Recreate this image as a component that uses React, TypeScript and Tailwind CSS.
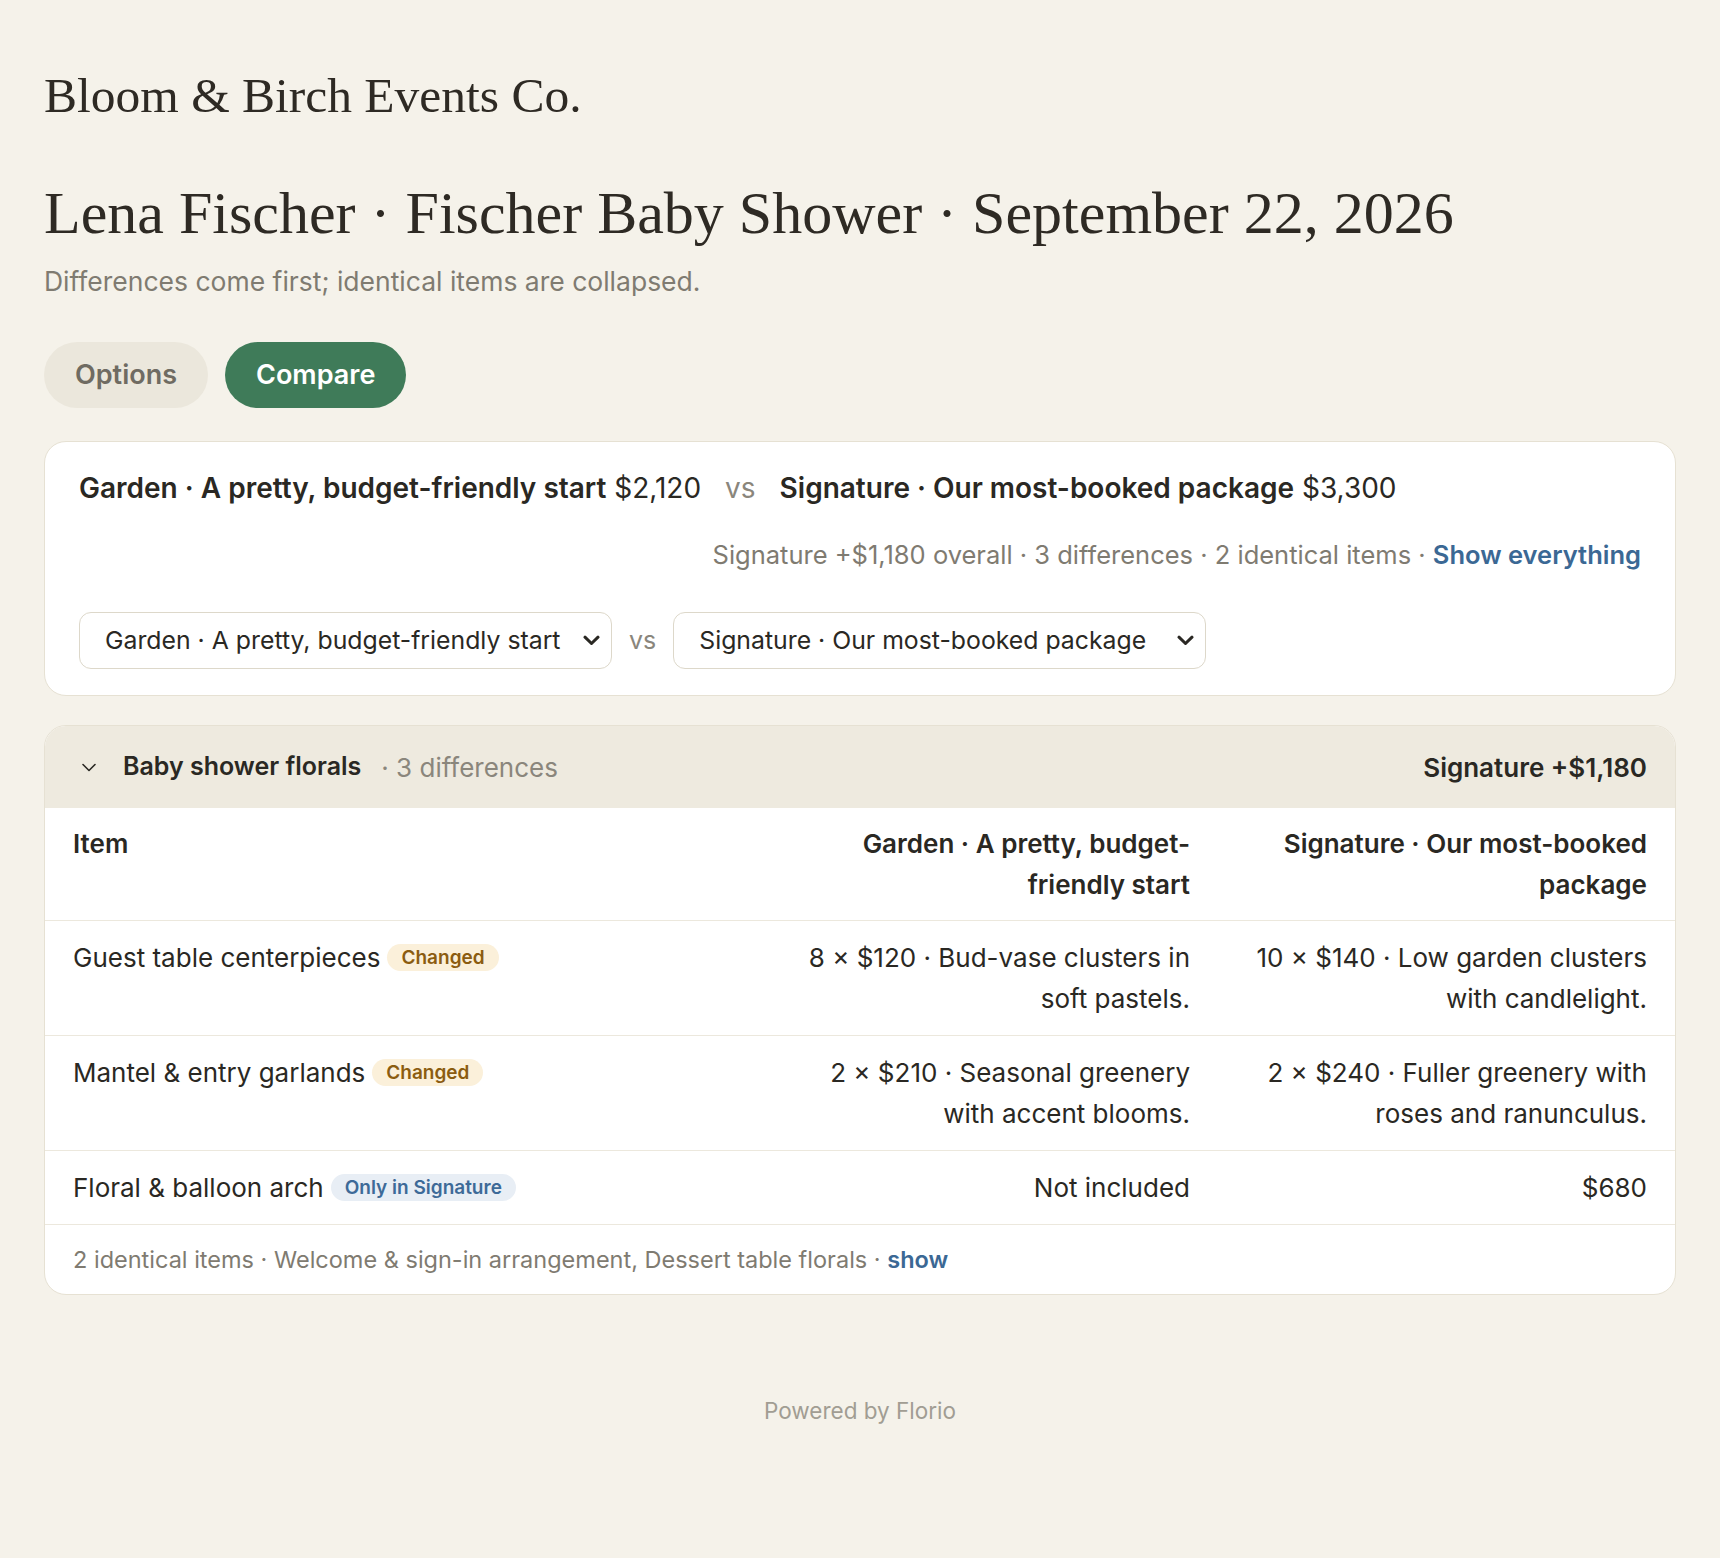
import React from "react";

const serif = "font-['Liberation_Serif','Times_New_Roman',serif]";

type Row = {
  name: string;
  badge: { label: string; tone: "changed" | "only" };
  a: string;
  b: string;
};

const rows: Row[] = [
  {
    name: "Guest table centerpieces",
    badge: { label: "Changed", tone: "changed" },
    a: "8 × $120 · Bud-vase clusters in soft pastels.",
    b: "10 × $140 · Low garden clusters with candlelight.",
  },
  {
    name: "Mantel & entry garlands",
    badge: { label: "Changed", tone: "changed" },
    a: "2 × $210 · Seasonal greenery with accent blooms.",
    b: "2 × $240 · Fuller greenery with roses and ranunculus.",
  },
  {
    name: "Floral & balloon arch",
    badge: { label: "Only in Signature", tone: "only" },
    a: "Not included",
    b: "$680",
  },
];

function Badge({ label, tone }: { label: string; tone: "changed" | "only" }) {
  const cls =
    tone === "changed"
      ? "bg-[#fbf0da] text-[#8b5c10]"
      : "bg-[#e8eef5] text-[#3d6a98]";
  return (
    <span
      className={`ml-[7px] inline-flex h-[27px] items-center rounded-full px-[14px] text-[19px] font-semibold leading-none ${cls}`}
    >
      {label}
    </span>
  );
}

function Chevron({ className = "" }: { className?: string }) {
  return (
    <svg width="17" height="11" viewBox="0 0 17 11" className={className} fill="none">
      <path d="M2 2.2 8.5 8.5 15 2.2" stroke="#2a2823" strokeWidth="3" strokeLinecap="round" strokeLinejoin="round" />
    </svg>
  );
}

function SelectBox({ label }: { label: string }) {
  return (
    <div className="flex h-[57px] w-[533px] items-center justify-between rounded-[12px] border-[1.5px] border-[#ddd8ca] bg-white pl-[25px] pr-[11px] text-[24.8px] text-[#2a2823]">
      <span>{label}</span>
      <Chevron />
    </div>
  );
}

export default function App() {
  return (
    <div className="min-h-[1558px] bg-[#f5f2ea] font-['Inter','Liberation_Sans',sans-serif] text-[#2a2823]">
      <div className="px-[44px] pt-[66px]">
        <div className={`${serif} text-[49.5px] leading-[59px] text-[#2e2a24]`}>
          Bloom &amp; Birch Events Co.
        </div>
        <h1 className={`${serif} mt-[52px] text-[60px] leading-[72px] text-[#2e2a24]`}>
          Lena Fischer · Fischer Baby Shower · September 22, 2026
        </h1>
        <p className="mt-[16px] text-[26.5px] leading-[32px] text-[#7f7b71]">
          Differences come first; identical items are collapsed.
        </p>

        <div className="mt-[45px] flex gap-[17px]">
          <button className="h-[66px] rounded-full bg-[#ebe7dc] px-[31px] text-[27px] font-semibold text-[#6f6b62]">
            Options
          </button>
          <button className="h-[66px] rounded-full bg-[#3f7b59] px-[31px] text-[27px] font-semibold text-white">
            Compare
          </button>
        </div>

        {/* picker card */}
        <section className="mt-[33px] rounded-[22px] border-[1.5px] border-[#e6e1d3] bg-white px-[34px] pb-[26px] pt-[28px]">
          <div className="flex items-center gap-[24px] text-[28px] leading-[36px]">
            <span>
              <span className="font-semibold">Garden · A pretty, budget-friendly start</span> $2,120
            </span>
            <span className="text-[#8a867c]">vs</span>
            <span>
              <span className="font-semibold">Signature · Our most-booked package</span> $3,300
            </span>
          </div>
          <div className="mt-[31px] text-right text-[25.5px] leading-[36px] text-[#7f7b71]">
            Signature +$1,180 overall · 3 differences · 2 identical items ·{" "}
            <span className="font-semibold text-[#3b6894]">Show everything</span>
          </div>
          <div className="mt-[39px] flex items-center gap-[17px]">
            <SelectBox label="Garden · A pretty, budget-friendly start" />
            <span className="text-[25px] text-[#8a867c]">vs</span>
            <SelectBox label="Signature · Our most-booked package" />
          </div>
        </section>

        {/* comparison table */}
        <section className="mt-[29px] overflow-hidden rounded-[22px] border-[1.5px] border-[#e6e1d3] bg-white">
          <div className="flex h-[82px] items-center justify-between bg-[#eeeadf] pl-[37px] pr-[28px] text-[26px]">
            <div className="flex items-center">
              <svg width="14" height="9" viewBox="0 0 14 9" fill="none" className="mr-[27px]">
                <path d="M1 1.5 7 7.5l6-6" stroke="#2a2823" strokeWidth="1.6" strokeLinecap="round" strokeLinejoin="round" />
              </svg>
              <span className="text-[25px] font-semibold">Baby shower florals</span>
              <span className="ml-[20px] text-[#8a867c]">· 3 differences</span>
            </div>
            <span className="font-semibold">Signature +$1,180</span>
          </div>

          <div className="grid grid-cols-[1fr_457px_457px] text-[26px] leading-[41px]">
            <div className="px-[28px] py-[15px] font-semibold">Item</div>
            <div className="px-[28px] py-[15px] text-right font-semibold">
              Garden · A pretty, budget-friendly start
            </div>
            <div className="px-[28px] py-[15px] text-right font-semibold">
              Signature · Our most-booked package
            </div>

            {rows.map((r) => (
              <React.Fragment key={r.name}>
                <div className="flex items-start border-t-[1.5px] border-[#ece8dd] px-[28px] py-[16px]">
                  <span>{r.name}</span>
                  <span className="flex h-[41px] items-center">
                    <Badge label={r.badge.label} tone={r.badge.tone} />
                  </span>
                </div>
                <div className="border-t-[1.5px] border-[#ece8dd] px-[28px] py-[16px] text-right">{r.a}</div>
                <div className="border-t-[1.5px] border-[#ece8dd] px-[28px] py-[16px] text-right">{r.b}</div>
              </React.Fragment>
            ))}

            <div className="col-span-3 border-t-[1.5px] border-[#ece8dd] px-[28px] py-[14px] text-[23.5px] text-[#7f7b71]">
              2 identical items · Welcome &amp; sign-in arrangement, Dessert table florals ·{" "}
              <span className="font-semibold text-[#3b6894]">show</span>
            </div>
          </div>
        </section>

        <footer className="mt-[104px] pb-[120px] text-center text-[22.5px] leading-[24px] text-[#a19d93]">
          Powered by Florio
        </footer>
      </div>
    </div>
  );
}
